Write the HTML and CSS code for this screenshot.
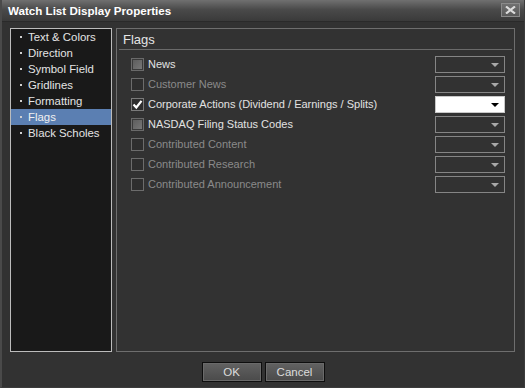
FILE: index.html
```html
<!DOCTYPE html>
<html>
<head>
<meta charset="utf-8">
<link rel="stylesheet" href="styles.css">
</head>
<body>
<div class="window">
  <div class="titlebar">
    <span class="title">Watch List Display Properties</span>
    <span class="close"><svg width="11" height="8" viewBox="0 0 11 8"><path d="M1 0.5 L10 7.5 M10 0.5 L1 7.5" stroke="#dcdcdc" stroke-width="2.2"/></svg></span>
  </div>
  <div class="content">
    <ul class="nav">
      <li>Text &amp; Colors</li>
      <li>Direction</li>
      <li>Symbol Field</li>
      <li>Gridlines</li>
      <li>Formatting</li>
      <li class="selected">Flags</li>
      <li>Black Scholes</li>
    </ul>
    <div class="panel">
      <div class="heading">Flags</div>
      <div class="rows">
        <div class="row"><span class="cb grey"></span><span class="label">News</span><span class="dd"><i class="tri"></i></span></div>
        <div class="row disabled"><span class="cb"></span><span class="label">Customer News</span><span class="dd"><i class="tri"></i></span></div>
        <div class="row"><span class="cb checked"><svg width="11" height="11" viewBox="0 0 11 11"><path d="M1.5 5.5 L4.3 8.5 L9.5 1.8" stroke="#fff" stroke-width="2.2" fill="none"/></svg></span><span class="label">Corporate Actions (Dividend / Earnings / Splits)</span><span class="dd white"><i class="tri"></i></span></div>
        <div class="row"><span class="cb grey"></span><span class="label">NASDAQ Filing Status Codes</span><span class="dd"><i class="tri"></i></span></div>
        <div class="row disabled"><span class="cb"></span><span class="label">Contributed Content</span><span class="dd"><i class="tri"></i></span></div>
        <div class="row disabled"><span class="cb"></span><span class="label">Contributed Research</span><span class="dd"><i class="tri"></i></span></div>
        <div class="row disabled"><span class="cb"></span><span class="label">Contributed Announcement</span><span class="dd"><i class="tri"></i></span></div>
      </div>
    </div>
  </div>
  <div class="footer">
    <button class="btn">OK</button>
    <button class="btn">Cancel</button>
  </div>
</div>
</body>
</html>
```
FILE: styles.css
```css
html, body {
  margin: 0;
  padding: 0;
  background: #323232;
}
body {
  width: 525px;
  height: 388px;
  overflow: hidden;
  font-family: "Liberation Sans", Arial, sans-serif;
  font-size: 11px;
}
.window {
  width: 525px;
  height: 388px;
  box-sizing: border-box;
  border-left: 2px solid #4a4a4a;
  border-right: 1px solid #3c3c3c;
  border-bottom: 1px solid #3c3c3c;
  background: #323232;
  display: flex;
  flex-direction: column;
}
.titlebar {
  height: 22px;
  flex: none;
  display: flex;
  align-items: center;
  justify-content: space-between;
  padding: 0 4px 0 6px;
  background: linear-gradient(#707070, #4a4a4a 45%, #3a3a3a);
  border-bottom: 1px solid #2a2a2a;
  box-sizing: border-box;
}
.title {
  color: #fff;
  font-weight: bold;
  font-size: 11.6px;
}
.close {
  width: 17px;
  height: 12px;
  border: 1px solid #8a8a8a;
  background: linear-gradient(#707070, #5a5a5a);
  display: flex;
  align-items: center;
  justify-content: center;
  margin-top: -2px;
}
.content {
  display: flex;
  gap: 4px;
  padding: 6px 9px 0 8px;
  height: 324px;
  flex: none;
}
.nav {
  list-style: none;
  margin: 0;
  padding: 0;
  width: 102px;
  box-sizing: border-box;
  border: 1px solid #bcbcbc;
  background: #191919;
}
.nav li {
  height: 16px;
  line-height: 16px;
  color: #e4e4e4;
  padding-left: 17px;
  position: relative;
  font-size: 11.4px;
}
.nav li::before {
  content: "";
  position: absolute;
  left: 9px;
  top: 7px;
  width: 2px;
  height: 2px;
  background: #d0d0d0;
}
.nav li.selected {
  background: #5b7fb2;
  color: #f0f0f0;
}
.panel {
  flex: 1;
  border: 1px solid #6e6e6e;
  box-sizing: border-box;
  padding: 0 2px;
}
.heading {
  color: #e4e4e4;
  font-size: 13px;
  height: 19px;
  line-height: 19px;
  padding: 1px 0 0 4px;
  border-bottom: 1px solid #6a6a6a;
}
.rows {
  padding: 4px 7px 0 12px;
}
.row {
  height: 20px;
  display: flex;
  align-items: center;
}
.label {
  flex: 1;
  color: #e2e2e2;
  margin-left: 4px;
  font-size: 11px;
}
.row.disabled .label {
  color: #8a8a8a;
}
.cb {
  width: 11px;
  height: 11px;
  border: 1px solid #6c6c6c;
  background: #2e2e2e;
  flex: none;
  display: flex;
  align-items: center;
  justify-content: center;
}
.cb.grey {
  border-color: #6a6a6a;
  background: linear-gradient(135deg, #5a5a5a, #7a7a7a);
  box-shadow: inset 0 0 0 1px #3a3a3a;
}
.cb.checked {
  border-color: #7a7a7a;
  background: #2e2e2e;
}
.dd {
  width: 68px;
  height: 15px;
  border: 1px solid #858585;
  flex: none;
  position: relative;
}
.dd.white {
  background: #fff;
  border-color: #c8c8c8;
}
.tri {
  position: absolute;
  right: 5px;
  top: 6px;
  width: 0;
  height: 0;
  border-left: 4px solid transparent;
  border-right: 4px solid transparent;
  border-top: 4px solid #a8a8a8;
}
.dd.white .tri {
  border-top-color: #000;
}
.footer {
  display: flex;
  justify-content: center;
  gap: 3px;
  padding: 10px 0 0 0;
}
.btn {
  width: 60px;
  height: 20px;
  border: 1px solid #0e0e0e;
  background: linear-gradient(#626262, #4a4a4a);
  color: #dcdcdc;
  font-family: "Liberation Sans", Arial, sans-serif;
  font-size: 11.5px;
  padding: 0;
  box-shadow: inset 0 0 0 1px #6a6a6a;
}
```
